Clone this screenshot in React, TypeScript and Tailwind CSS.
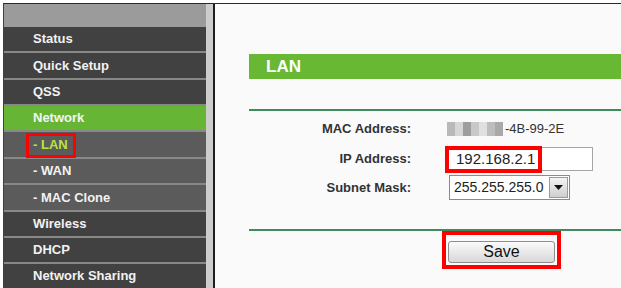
import React from "react";

type Item = { label: string; sub?: boolean; active?: boolean; current?: boolean; h: number };

// heights include the 2px separator at the bottom
const menu: Item[] = [
  { label: "Status", h: 26 },
  { label: "Quick Setup", h: 27 },
  { label: "QSS", h: 26 },
  { label: "Network", active: true, h: 26 },
  { label: "- LAN", sub: true, current: true, h: 27 },
  { label: "- WAN", sub: true, h: 26 },
  { label: "- MAC Clone", sub: true, h: 27 },
  { label: "Wireless", h: 26 },
  { label: "DHCP", h: 26 },
  { label: "Network Sharing", h: 26 },
];

const macBlocks = ["#b9b9b9", "#d6d6d6", "#9e9e9e", "#c8c8c8", "#e0e0e0", "#bdbdbd", "#a9a9a9"];

function Sidebar() {
  return (
    <div className="flex w-[209px] shrink-0 bg-[#cdcdcd]">
      <div className="flex w-[202px] flex-col bg-[#8a8a8a]">
        <div className="h-[23px] shrink-0 bg-[#9b9b9b]" />
        {menu.map((m) => (
          <div
            key={m.label}
            style={{ height: m.h }}
            className={
              "relative flex shrink-0 items-center border-b-2 border-[#888888] pl-[29px] text-[13px] font-bold " +
              (m.active
                ? "bg-[#67b535] text-[#f4f4f4]"
                : m.sub
                ? "bg-[#5b5b5b] text-[#f2f2f2]"
                : "bg-[#414141] text-[#f2f2f2]")
            }
          >
            <span className={m.current ? "text-[#b9e43c]" : ""}>{m.label}</span>
            {m.current && (
              <div className="absolute left-[22px] top-[1px] h-[25px] w-[50px] border-[3px] border-[#ff0000]" />
            )}
          </div>
        ))}
      </div>
    </div>
  );
}

function Main() {
  return (
    <div className="flex flex-1 flex-col border-l-2 border-[#1e1e1e] bg-[#fafafa] pl-[34px]">
      <div className="mt-[50px] flex h-[25px] items-center bg-[#68b834] pl-[17px] text-[17px] font-bold text-white">
        LAN
      </div>
      <div className="mt-[30px] h-[2px] bg-[#3e8c5c]" />
      <div className="mt-[6px] grid grid-cols-[162px_1fr] items-center gap-x-[36px] text-[13px] text-[#333333]">
        <div className="h-[24px] text-right font-bold leading-[24px]">MAC Address:</div>
        <div className="flex h-[24px] items-center">
          <div className="flex h-[14px]">
            {macBlocks.map((c, i) => (
              <div key={i} className="h-full w-[8px]" style={{ background: c }} />
            ))}
          </div>
          <span className="ml-[2px]">-4B-99-2E</span>
        </div>

        <div className="mt-[6px] h-[24px] text-right font-bold leading-[24px]">IP Address:</div>
        <div className="relative mt-[6px] -ml-[2px] flex h-[24px] w-[148px] items-center border border-[#a5a5a5] bg-white pl-[10px] text-[15px] text-[#222222]">
          192.168.2.1
          <div className="absolute -left-[1px] -top-[2px] h-[27px] w-[97px] border-[4px] border-[#ff0000]" />
        </div>

        <div className="mt-[4px] h-[25px] text-right font-bold leading-[25px]">Subnet Mask:</div>
        <div className="mt-[4px] ml-[2px] flex h-[25px] w-[121px] items-center border border-[#8a8a8a] bg-white pl-[4px] text-[14px] text-[#222222]">
          <span className="flex-1">255.255.255.0</span>
          <div className="mr-[1px] flex h-[21px] w-[19px] items-center justify-center border border-[#9a9a9a] bg-gradient-to-b from-[#f4f4f4] to-[#cfcfcf]">
            <svg width="9" height="5" viewBox="0 0 9 5">
              <path d="M0 0 H9 L4.5 5 Z" fill="#111111" />
            </svg>
          </div>
        </div>
      </div>
      <div className="mt-[29px] h-[2px] bg-[#3e8c5c]" />
      <div className="ml-[193px] flex h-[38px] w-[119px] justify-center border-[4px] border-[#ff0000] pt-[6px]">
        <div className="flex h-[22px] w-[107px] items-center justify-center rounded-[3px] border border-[#8d8d8d] bg-gradient-to-b from-[#fbfbfb] to-[#d8d8d8] text-[16px] text-[#111111]">
          Save
        </div>
      </div>
    </div>
  );
}

export default function App() {
  return (
    <div
      className="h-[288px] w-[621px] overflow-hidden bg-white pl-[3px] pt-[3px]"
      style={{ fontFamily: '"Liberation Sans", Arial, sans-serif' }}
    >
      <div className="flex h-full border-l border-t border-l-[#2c4a45] border-t-[#2a2a2a]">
        <Sidebar />
        <Main />
      </div>
    </div>
  );
}
